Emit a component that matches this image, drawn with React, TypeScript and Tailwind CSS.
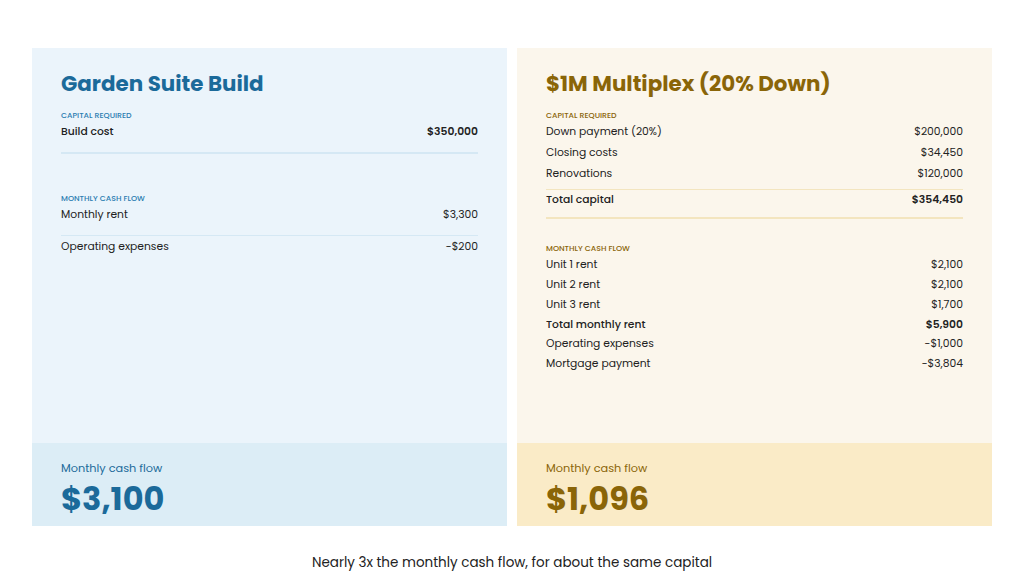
import React from "react";

type Row = { label: string; value: string; bold?: boolean; h: string };

function Label({ children, color }: { children: React.ReactNode; color: string }) {
  return (
    <div className={`h-[12px] flex items-center text-[7.8px] font-medium uppercase ${color}`}>
      {children}
    </div>
  );
}

function RowItem({ r }: { r: Row }) {
  return (
    <div className={`flex items-center justify-between ${r.h} text-[10.75px] text-[#222222]`}>
      <span className={r.bold ? "font-medium" : "font-normal"}>{r.label}</span>
      <span className={r.bold ? "font-semibold" : "font-normal"}>{r.value}</span>
    </div>
  );
}

export default function App() {
  return (
    <div className="w-[1024px] h-[576px] bg-white font-['Poppins','Inter',sans-serif] flex flex-col">
      <div className="pt-[48px] px-[32px] grid grid-cols-2 gap-[10px]">
        {/* Left panel */}
        <div className="flex flex-col h-[478px]">
          <div className="flex-1 bg-[#EBF4FB] px-[29px] pt-[20px]">
            <div className="h-[32px] flex items-center text-[21.4px] font-bold text-[#1B6A9A]">
              Garden Suite Build
            </div>
            <div className="mt-[10px]">
              <Label color="text-[#2A7DB1]">Capital required</Label>
            </div>
            <RowItem r={{ label: "Build cost", value: "$350,000", bold: true, h: "h-[20px]" }} />
            <div className="mt-[10px] h-[2px] bg-[#D5E8F4]" />
            <div className="mt-[39px]">
              <Label color="text-[#2A7DB1]">Monthly cash flow</Label>
            </div>
            <RowItem r={{ label: "Monthly rent", value: "$3,300", h: "h-[20px]" }} />
            <div className="mt-[10px] h-[1px] bg-[#D5E8F4]" />
            <RowItem r={{ label: "Operating expenses", value: "-$200", h: "h-[22px]" }} />
          </div>
          <div className="h-[83px] bg-[#DCEDF6] px-[29px] pt-[17px]">
            <div className="text-[11.3px] leading-[16px] text-[#1B6A9A]">Monthly cash flow</div>
            <div className="mt-[2px] text-[32px] leading-[42px] font-bold text-[#1B6A9A]">$3,100</div>
          </div>
        </div>

        {/* Right panel */}
        <div className="flex flex-col h-[478px]">
          <div className="flex-1 bg-[#FBF6EC] px-[29px] pt-[20px]">
            <div className="h-[32px] flex items-center text-[21.4px] font-bold text-[#8A6508]">
              $1M Multiplex (20% Down)
            </div>
            <div className="mt-[10px]">
              <Label color="text-[#8A6508]">Capital required</Label>
            </div>
            <RowItem r={{ label: "Down payment (20%)", value: "$200,000", h: "h-[21px]" }} />
            <RowItem r={{ label: "Closing costs", value: "$34,450", h: "h-[21px]" }} />
            <RowItem r={{ label: "Renovations", value: "$120,000", h: "h-[21px]" }} />
            <div className="mt-[4px] h-[1px] bg-[#F3E5BF]" />
            <RowItem r={{ label: "Total capital", value: "$354,450", bold: true, h: "h-[20px]" }} />
            <div className="mt-[7px] h-[2px] bg-[#F3E5BF]" />
            <div className="mt-[24px]">
              <Label color="text-[#8A6508]">Monthly cash flow</Label>
            </div>
            <RowItem r={{ label: "Unit 1 rent", value: "$2,100", h: "h-[20px]" }} />
            <RowItem r={{ label: "Unit 2 rent", value: "$2,100", h: "h-[20px]" }} />
            <RowItem r={{ label: "Unit 3 rent", value: "$1,700", h: "h-[20px]" }} />
            <RowItem r={{ label: "Total monthly rent", value: "$5,900", bold: true, h: "h-[20px]" }} />
            <RowItem r={{ label: "Operating expenses", value: "-$1,000", h: "h-[19px]" }} />
            <RowItem r={{ label: "Mortgage payment", value: "-$3,804", h: "h-[20px]" }} />
          </div>
          <div className="h-[83px] bg-[#FAEBC7] px-[29px] pt-[17px]">
            <div className="text-[11.3px] leading-[16px] text-[#8A6508]">Monthly cash flow</div>
            <div className="mt-[2px] text-[32px] leading-[42px] font-bold text-[#8A6508]">$1,096</div>
          </div>
        </div>
      </div>
      <div className="mt-[27px] text-center text-[13.5px] leading-[20px] text-[#222222]">
        Nearly 3x the monthly cash flow, for about the same capital
      </div>
    </div>
  );
}
